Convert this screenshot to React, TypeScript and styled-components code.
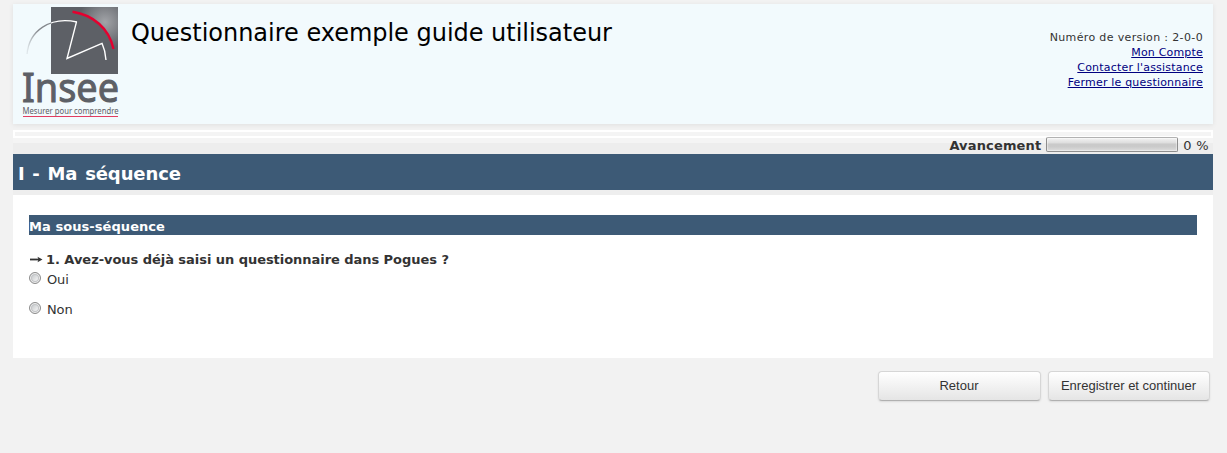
import React, { useState } from "react";
import styled, { createGlobalStyle } from "styled-components";

const GlobalStyle = createGlobalStyle`
  * { box-sizing: border-box; }
  body {
    margin: 0;
    background: #f2f2f2;
    color: #333;
    font-family: Verdana, "DejaVu Sans", sans-serif;
    font-size: 13px;
  }
`;

const Page = styled.div`
  width: 1200px;
  height: 453px;
  margin-left: 13px;
  padding-top: 4px;
`;

const Header = styled.header`
  display: flex;
  height: 120px;
  padding: 3px 10px 0;
  background: #f2fafd;
  box-shadow: 0 1px 5px rgba(0, 0, 0, 0.08);
`;

const LogoDrawing = styled.svg`
  width: 96px;
  height: 112px;
  overflow: visible;
`;

const Title = styled.h1`
  flex: 1;
  margin: 11px 0 0 12px;
  color: #000;
  font-size: 24px;
  line-height: 30px;
  font-weight: 400;
  letter-spacing: -0.02px;
  white-space: nowrap;
`;

const AccountLinks = styled.nav`
  display: flex;
  flex-direction: column;
  align-items: flex-end;
  margin-top: 23px;
  font-size: 11px;
  line-height: 15px;
`;

const Version = styled.span`
  letter-spacing: 0.36px;
`;

const AccountLink = styled.a`
  color: #000080;
  letter-spacing: 0.19px;
  text-decoration: underline;
`;

const Frame = styled.div`
  height: 8px;
  margin-top: 6px;
  border: 2px solid #fff;
  background: #f4f4f4;
`;

const ProgressRow = styled.div`
  display: flex;
  justify-content: flex-end;
  align-items: center;
  height: 16px;
  padding-right: 4px;
  background: linear-gradient(#f4f4f4 0 5px, #ededed 5px);
`;

const ProgressLabel = styled.strong`
  margin: -2px 5px 0 0;
  letter-spacing: 0.15px;
`;

const ProgressTrack = styled.div`
  width: 132px;
  height: 15px;
  margin: -3px 5px 0 0;
  border: 1px solid #8e8e8e;
  border-top-color: #b2b2b2;
  border-radius: 2px;
  background: linear-gradient(#f3f3f3 0%, #dedede 38%, #cacaca 46%, #cacaca 65%, #dcdcdc 100%);
  box-shadow: inset 0 0 1px 1px rgba(255, 255, 255, 0.45);
`;

const ProgressValue = styled.span`
  margin-top: -2px;
  letter-spacing: 0.3px;
`;

const Sequence = styled.h2`
  height: 36px;
  margin: 0;
  padding-left: 5px;
  background: #3d5a76;
  color: #fff;
  font-size: 18px;
  line-height: 39px;
  letter-spacing: -0.1px;
  word-spacing: 1.6px;
`;

const Panel = styled.main`
  height: 168px;
  padding: 20px 16px 0;
  border-top: 5px solid #eee;
  background: #fff;
`;

const SubSequence = styled.h3`
  height: 20px;
  margin: 0;
  background: #3d5a76;
  color: #fff;
  font-size: 13px;
  line-height: 23px;
  letter-spacing: 0.06px;
`;

const Question = styled.div`
  display: flex;
  align-items: center;
  height: 16px;
  margin-top: 16px;
  font-weight: 700;
  letter-spacing: -0.045px;
`;

const Arrow = styled.svg`
  width: 13px;
  height: 7px;
  margin: 1px 3px 0 1px;
`;

const Answer = styled.label`
  display: flex;
  align-items: center;
  height: 16px;
  margin-top: 4px;
  letter-spacing: -0.15px;

  & + & { margin-top: 14px; }
`;

const Radio = styled.input`
  appearance: none;
  width: 12px;
  height: 12px;
  margin: -2px 6px 0 0;
  border: 1px solid #8c8c8c;
  border-radius: 50%;
  background: linear-gradient(135deg, #b8bcc0, #f2f2f2 75%);
  box-shadow: inset 0 0 0 1px #f2f2f2, inset 0 0 0 2px #c2c4c6;

  &:checked { background: radial-gradient(#234 35%, #ddd 45%); }
`;

const Actions = styled.footer`
  display: flex;
  justify-content: flex-end;
  gap: 7px;
  padding: 13px 3px 0;
`;

const Button = styled.button<{ $width: number }>`
  width: ${({ $width }) => $width}px;
  height: 30px;
  padding: 0 1px 1px 0;
  border: 1px solid #d6d6d6;
  border-bottom-color: #b0b0b0;
  border-radius: 4px;
  background: linear-gradient(#fff, #e5e5e5);
  box-shadow: 0 1px 2px rgba(0, 0, 0, 0.1);
  color: #333;
  font: 13px "Liberation Sans", Arial, sans-serif;
  white-space: nowrap;
`;

const Logo = () => (
  <LogoDrawing viewBox="0 0 96 112" role="img" aria-label="Insee">
    <defs>
      <radialGradient id="glow" gradientUnits="userSpaceOnUse" cx="82" cy="15" r="27">
        <stop offset="0" stopColor="#a2a4a8" />
        <stop offset="1" stopColor="#5d6066" />
      </radialGradient>
      <linearGradient id="arc" gradientUnits="userSpaceOnUse" x1="4" y1="0" x2="28" y2="0">
        <stop offset="0" stopColor="#5d6066" stopOpacity="0.1" />
        <stop offset="0.5" stopColor="#85888d" />
        <stop offset="0.98" stopColor="#85888d" />
        <stop offset="1" stopColor="#fff" />
      </linearGradient>
    </defs>
    <path d="M28 0H95V67H28Z" fill="#5d6066" />
    <path d="M49 4.5C70 8 85 22 90 42L95 48V0H49Z" fill="url(#glow)" />
    <path d="M4 47C6 24 27 9 54 15" fill="none" stroke="url(#arc)" strokeWidth="1.3" />
    <path d="M53.5 14.9L44 51.5L79 36.3Q82.5 44 83 53" fill="none" stroke="#fff" strokeWidth="1.4" />
    <path d="M49.5 4.8C70 8 86 21 90.5 42" fill="none" stroke="#e4002f" strokeWidth="2.4" />
    <text x="-1" y="94.5" fill="#5d6066" stroke="#5d6066" strokeWidth="1" fontFamily="Noto Sans, sans-serif" fontSize="39.5" textLength="97" lengthAdjust="spacingAndGlyphs">Insee</text>
    <text x="-0.5" y="107" fill="#5d6066" fontFamily="Noto Sans, sans-serif" fontSize="8.5" textLength="96" lengthAdjust="spacingAndGlyphs">Mesurer pour comprendre</text>
    <path d="M0 109.5H95" stroke="#e23c60" />
  </LogoDrawing>
);

export default function App() {
  const [answer, setAnswer] = useState("");
  return (
    <>
      <GlobalStyle />
      <Page>
        <Header>
          <Logo />
          <Title>Questionnaire exemple guide utilisateur</Title>
          <AccountLinks>
            <Version>Numéro de version : 2-0-0</Version>
            <AccountLink href="#compte">Mon Compte</AccountLink>
            <AccountLink href="#assistance">Contacter l'assistance</AccountLink>
            <AccountLink href="#fermer">Fermer le questionnaire</AccountLink>
          </AccountLinks>
        </Header>
        <Frame />
        <ProgressRow>
          <ProgressLabel>Avancement</ProgressLabel>
          <ProgressTrack />
          <ProgressValue>0 %</ProgressValue>
        </ProgressRow>
        <Sequence>I - Ma séquence</Sequence>
        <Panel>
          <SubSequence>Ma sous-séquence</SubSequence>
          <Question>
            <Arrow viewBox="0 0 13 7"><path d="M0 3.5H9" stroke="#333" strokeWidth="1.8" /><path d="M7.5 .8L12.5 3.5L7.5 6.2L8.5 3.5Z" fill="#333" /></Arrow>
            1. Avez-vous déjà saisi un questionnaire dans Pogues ?
          </Question>
          {["Oui", "Non"].map((label) => (
            <Answer key={label}>
              <Radio type="radio" name="pogues" checked={answer === label} onChange={() => setAnswer(label)} />
              {label}
            </Answer>
          ))}
        </Panel>
        <Actions>
          <Button $width={163}>Retour</Button>
          <Button $width={162}>Enregistrer et continuer</Button>
        </Actions>
      </Page>
    </>
  );
}
